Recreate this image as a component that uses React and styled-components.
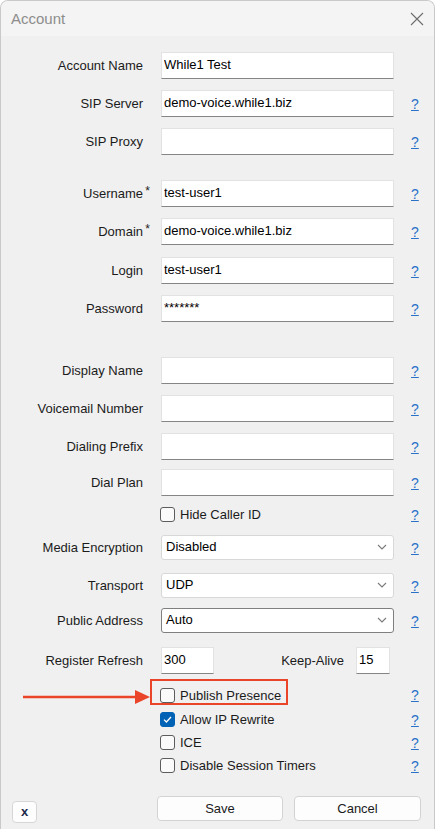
import React from 'react';
import styled, { createGlobalStyle } from 'styled-components';

const GlobalStyle = createGlobalStyle`
    body {
        margin: 0;
        background: #ffffff;
        font-family: 'Liberation Sans', Arial, sans-serif;
    }
`;

const Window = styled.div`
    position: relative;
    box-sizing: border-box;
    width: 435px;
    height: 829px;
    border: 1px solid #c9c9c9;
    border-bottom: none;
    border-radius: 8px 8px 0 0;
    background: #f0f0f0;
    overflow: hidden;
`;

const TitleBar = styled.div`
    height: 35px;
    background: #f4f4f4;
    display: flex;
    align-items: center;
    justify-content: space-between;
    padding: 0 10px 0 10px;
`;

const Title = styled.div`
    font-size: 15px;
    color: #8d8d8d;
`;

const Body = styled.div`
    display: flex;
    flex-direction: column;
`;

const Row = styled.div`
    display: grid;
    grid-template-columns: 142px 233px 1fr;
    column-gap: 18px;
    align-items: center;
    height: ${p => p.h || 27}px;
    margin-top: ${p => p.mt || 0}px;
`;

const Label = styled.div`
    text-align: right;
    font-size: 13px;
    color: #1b1b1b;
    white-space: nowrap;
`;

const Star = styled.span`
    display: inline-block;
    margin-right: -7px;
    width: 7px;
    text-align: right;
    font-size: 12px;
    position: relative;
    top: -3px;
`;

const TextBox = styled.input`
    box-sizing: border-box;
    width: ${p => p.w ? p.w + 'px' : '100%'};
    height: 27px;
    margin: 0;
    padding: 0 2px 3px 2px;
    border: 1px solid #e2e2e2;
    border-bottom: 1px solid #858585;
    background: #ffffff;
    font-family: 'Liberation Sans', Arial, sans-serif;
    font-size: 13px;
    color: #000;
    outline: none;
`;

const Select = styled.div`
    box-sizing: border-box;
    height: 25px;
    display: flex;
    align-items: center;
    justify-content: space-between;
    padding: 0 6px 2px 4px;
    border: 1px solid ${p => p.focused ? '#7f7f7f' : '#d8d8d8'};
    border-radius: 3px;
    background: #ffffff;
    font-size: 13px;
    color: #000;
`;

const Help = styled.a`
    font-size: 14px;
    color: #2a72c8;
    text-decoration: underline;
    margin-left: -1px;
    cursor: pointer;
`;

const CheckRow = styled.label`
    display: flex;
    align-items: center;
    gap: 5px;
    margin-left: -1px;
    font-size: 13px;
    color: #1b1b1b;
`;

const Box = styled.span`
    box-sizing: border-box;
    width: 15px;
    height: 15px;
    border-radius: 3px;
    border: 1px solid ${p => p.checked ? '#0062b5' : '#5c5c5c'};
    background: ${p => p.checked ? '#0062b5' : '#fafafa'};
    display: flex;
    align-items: center;
    justify-content: center;
`;

const Inline = styled.div`
    display: flex;
    align-items: center;
`;

const InlineLabel = styled.span`
    margin-left: auto;
    margin-right: 12px;
    font-size: 13px;
    color: #1b1b1b;
`;

const Footer = styled.div`
    display: flex;
    align-items: flex-start;
    margin-top: 19px;
    padding: 0 13px 0 11px;
`;

const SmallButton = styled.button`
    box-sizing: border-box;
    width: 25px;
    height: 22px;
    margin-top: 5px;
    padding: 0 0 2px;
    border: 1px solid #d6d6d6;
    border-radius: 4px;
    background: #fdfdfd;
    font-family: 'Liberation Sans', Arial, sans-serif;
    font-weight: bold;
    font-size: 13px;
    color: #1d2a4a;
`;

const Button = styled.button`
    box-sizing: border-box;
    width: ${p => p.w}px;
    height: 25px;
    margin-left: ${p => p.ml || 0}px;
    border: 1px solid #d3d3d3;
    border-radius: 4px;
    background: #fdfdfd;
    font-family: 'Liberation Sans', Arial, sans-serif;
    font-size: 13px;
    color: #1b1b1b;
`;

const Highlight = styled.div`
    position: absolute;
    left: 149px;
    top: 678px;
    width: 138px;
    height: 26px;
    box-sizing: border-box;
    border: 2px solid #ea4429;
    pointer-events: none;
`;

const Arrow = styled.svg`
    position: absolute;
    left: 21px;
    top: 688px;
    pointer-events: none;
`;

const Chevron = () => (
    <svg width="10" height="6" viewBox="0 0 10 6">
        <path d="M1 1 L5 5 L9 1" fill="none" stroke="#7a7a7a" strokeWidth="1.1" />
    </svg>
);

const Check = () => (
    <svg width="9" height="7" viewBox="0 0 9 7">
        <path d="M1 3.6 L3.4 6 L8 1" fill="none" stroke="#ffffff" strokeWidth="1.3" />
    </svg>
);

const Field = ({ label, req, value, mt, help = true }) => (
    <Row mt={mt}>
        <Label>{label}{req && <Star>*</Star>}</Label>
        <TextBox readOnly value={value || ''} />
        {help ? <Help>?</Help> : <span />}
    </Row>
);

const Combo = ({ label, value, mt, focused }) => (
    <Row mt={mt} h={25}>
        <Label>{label}</Label>
        <Select focused={focused}>
            <span>{value}</span>
            <Chevron />
        </Select>
        <Help>?</Help>
    </Row>
);

const Option = ({ text, checked, mt, h }) => (
    <Row mt={mt} h={h}>
        <span />
        <CheckRow>
            <Box checked={checked}>{checked && <Check />}</Box>
            {text}
        </CheckRow>
        <Help>?</Help>
    </Row>
);

const App = () => {
    return (
        <>
            <GlobalStyle />
            <Window>
                <TitleBar>
                    <Title>Account</Title>
                    <svg width="14" height="14" viewBox="0 0 14 14">
                        <path d="M1 1 L13 13 M13 1 L1 13" stroke="#6d6d6d" strokeWidth="1.1" />
                    </svg>
                </TitleBar>
                <Body>
                    <Field label="Account Name" value="While1 Test" mt={16} help={false} />
                    <Field label="SIP Server" value="demo-voice.while1.biz" mt={11} />
                    <Field label="SIP Proxy" mt={11} />

                    <Field label="Username" req value="test-user1" mt={25} />
                    <Field label="Domain" req value="demo-voice.while1.biz" mt={11} />
                    <Field label="Login" value="test-user1" mt={12} />
                    <Field label="Password" value="*******" mt={11} />

                    <Field label="Display Name" mt={35} />
                    <Field label="Voicemail Number" mt={11} />
                    <Field label="Dialing Prefix" mt={11} />
                    <Field label="Dial Plan" mt={9} />
                    <Option text="Hide Caller ID" mt={6} h={25} />

                    <Combo label="Media Encryption" value="Disabled" mt={8} />
                    <Combo label="Transport" value="UDP" mt={13} />
                    <Combo label="Public Address" value="Auto" mt={10} focused />

                    <Row mt={14}>
                        <Label>Register Refresh</Label>
                        <Inline>
                            <TextBox readOnly value="300" w={53} />
                            <InlineLabel>Keep-Alive</InlineLabel>
                            <TextBox readOnly value="15" w={34} />
                            <span style={{ width: 4 }} />
                        </Inline>
                        <span />
                    </Row>

                    <Option text="Publish Presence" mt={9} h={24} />
                    <Option text="Allow IP Rewrite" checked mt={1} h={23} />
                    <Option text="ICE" h={23} />
                    <Option text="Disable Session Timers" h={23} />

                    <Footer>
                        <SmallButton>x</SmallButton>
                        <Button w={126} ml={120}>Save</Button>
                        <Button w={127} ml={11}>Cancel</Button>
                    </Footer>
                </Body>

                <Highlight />
                <Arrow width="130" height="16" viewBox="0 0 130 16">
                    <path d="M1 8 L116 8" stroke="#ea4429" strokeWidth="2.4" />
                    <polygon points="113,1 128,8 113,15" fill="#ea4429" />
                </Arrow>
            </Window>
        </>
    );
};

export default App;
